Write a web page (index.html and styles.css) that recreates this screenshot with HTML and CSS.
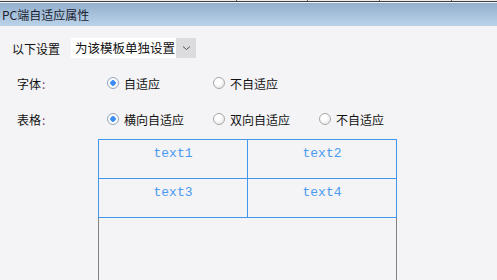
FILE: index.html
```html
<!DOCTYPE html>
<html lang="zh-CN">
<head>
    <meta charset="UTF-8">
    <meta name="viewport" content="width=device-width, initial-scale=1.0">
    <title>PC端自适应属性</title>
    <link rel="stylesheet" href="styles.css">
</head>
<body>
    <div class="ruler"></div>
    <div class="title-bar">PC端自适应属性</div>
    <div class="panel">
        <div class="setting-row">
            <span class="setting-label">以下设置</span>
            <div class="select">
                <span class="select-value">为该模板单独设置</span>
                <span class="select-arrow">
                    <svg width="9" height="6" viewBox="0 0 9 6"><path d="M1 1.5 L4.5 4.5 L8 1.5" fill="none" stroke="#555" stroke-width="1"/></svg>
                </span>
            </div>
        </div>
        <div class="option-row">
            <span class="option-label">字体<span class="colon">:</span></span>
            <label class="option"><span class="radio checked"></span>自适应</label>
            <label class="option"><span class="radio"></span>不自适应</label>
        </div>
        <div class="option-row">
            <span class="option-label">表格<span class="colon">:</span></span>
            <label class="option"><span class="radio checked"></span>横向自适应</label>
            <label class="option"><span class="radio"></span>双向自适应</label>
            <label class="option"><span class="radio"></span>不自适应</label>
        </div>
        <table class="preview">
            <tr>
                <td>text1</td>
                <td>text2</td>
            </tr>
            <tr>
                <td>text3</td>
                <td>text4</td>
            </tr>
        </table>
        <div class="preview-blank"></div>
    </div>
</body>
</html>
```

FILE: styles.css
```css
body {
    margin: 0;
    background: #f4f4f6;
    font-family: "Noto Sans CJK SC", "Noto Sans", sans-serif;
    font-size: 12px;
    color: #111;
    overflow: hidden;
}
.ruler {
    height: 1px;
    background-color: #ececec;
    background-image:
        linear-gradient(#666, #666),
        linear-gradient(#666, #666),
        linear-gradient(#666, #666),
        linear-gradient(#666, #666);
    background-size: 1px 1px;
    background-repeat: no-repeat;
    background-position: 236px 0, 307px 0, 379px 0, 451px 0;
    border-bottom: 1px solid #3e3e3e;
}
.title-bar {
    height: 23px;
    line-height: 23px;
    margin-top: 1px;
    padding-left: 2px;
    background: linear-gradient(#93afcc, #bad3ea);
    color: #1c2230;
    font-size: 12px;
}
.panel {
    padding-top: 12px;
}
.setting-row {
    display: flex;
    align-items: center;
    height: 20px;
    padding-left: 12px;
}
.setting-label {
    width: 59px;
}
.select {
    display: flex;
    height: 20px;
    width: 125px;
}
.select-value {
    flex: 1;
    background: #fff;
    font-size: 12.5px;
    line-height: 20px;
    padding-left: 4px;
}
.select-arrow {
    width: 20px;
    background: #dcdcde;
    display: flex;
    align-items: center;
    justify-content: center;
}
.option-row {
    display: flex;
    align-items: center;
    height: 36px;
    padding-left: 17px;
}
.setting-row + .option-row {
    margin-top: 7px;
}
.option-label {
    width: 90px;
}
.colon {
    color: #7a3a6a;
    margin-left: 1px;
}
.option {
    display: flex;
    align-items: center;
    width: 106px;
}
.radio {
    box-sizing: border-box;
    width: 12px;
    height: 12px;
    margin-right: 5px;
    border-radius: 50%;
    border: 1px solid #a9a9a9;
    background: radial-gradient(circle at 40% 35%, #ffffff 30%, #dedede 100%);
}
.radio.checked {
    border-color: #94a6bf;
    background: radial-gradient(circle, #3d8ef0 0, #3d8ef0 2.5px, #ffffff 3px, #f2f2f2 100%);
}
.preview {
    margin: 2px 0 0 98px;
    border-collapse: collapse;
    width: 299px;
    table-layout: fixed;
}
.preview td {
    border: 1px solid #4197ee;
    height: 39px;
    padding: 6px 0 0;
    box-sizing: border-box;
    vertical-align: top;
    text-align: center;
    font-family: "Liberation Mono", monospace;
    font-size: 13px;
    line-height: 16px;
    color: #4a9af0;
}
.preview-blank {
    margin-left: 98px;
    width: 297px;
    height: 62px;
    border-left: 1px solid #808080;
    border-right: 1px solid #808080;
}
```
